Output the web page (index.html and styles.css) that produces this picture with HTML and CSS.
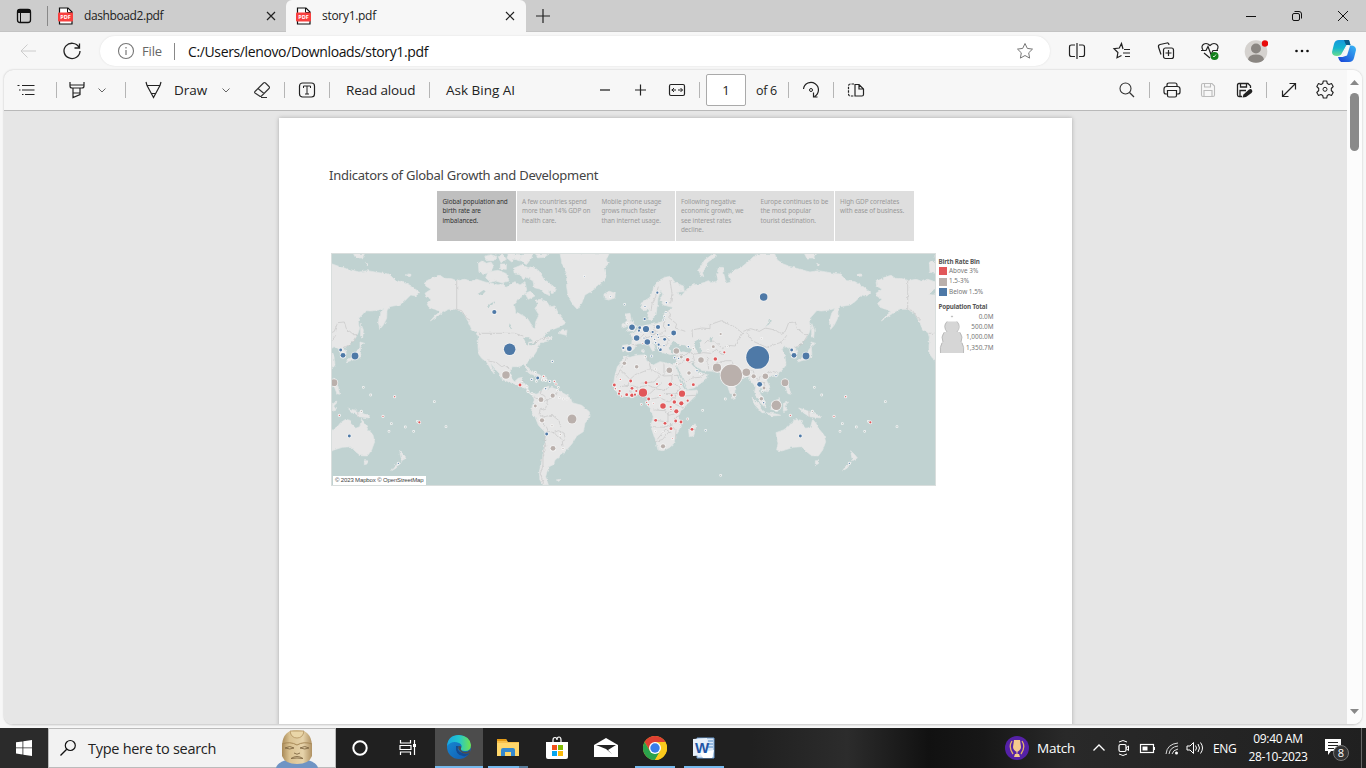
FILE: index.html
```html
<!DOCTYPE html>
<html lang="en">
<head>
<meta charset="utf-8">
<title>story1.pdf</title>
<link rel="stylesheet" href="styles.css">
</head>
<body>
<svg class="defs" width="0" height="0">
  <defs>
    <symbol id="pdf" viewBox="0 0 16 18"><path d="M1.500 1h8.500l4 4v12h-12.500z" fill="#fff" stroke="#111" stroke-width="1.200"/><path d="M9.500 1v4.500h4.500" fill="none" stroke="#111"/><rect x="0" y="5.500" width="15" height="9" rx="1" fill="#f8403f"/><text x="7.500" y="12.300" text-anchor="middle" class="pdf-label">PDF</text></symbol>
    <symbol id="close" viewBox="0 0 10 10"><path d="M1 1l8 8M9 1l-8 8" stroke="#222" stroke-width="1.200"/></symbol>
    <symbol id="chev" viewBox="0 0 10 20"><path d="M1.500 8.500l3.500 3.500 3.500-3.500" fill="none" stroke="#666"/></symbol>
  </defs>
</svg>
<div class="tabs">
  <svg class="i" viewBox="0 0 20 20"><rect x="3.500" y="3.500" width="13" height="13" rx="2.500" fill="none" stroke="#111" stroke-width="1.300"/><path d="M3.500 7V5q0-2 2-2h9q2 0 2 2v2z" fill="#111"/><path d="M6.500 7v9" stroke="#111"/></svg>
  <span class="tsep"></span>
  <div class="tab idle"><svg class="pdf"><use href="#pdf"/></svg><span class="t1">dashboad2.pdf</span><svg class="x"><use href="#close"/></svg></div>
  <div class="tab active"><svg class="pdf"><use href="#pdf"/></svg><span class="t2">story1.pdf</span><svg class="x"><use href="#close"/></svg></div>
  <svg class="newtab" viewBox="0 0 14 14"><path d="M7 0v14M0 7h14" stroke="#222" stroke-width="1.200"/></svg>
  <div class="win">
    <svg viewBox="0 0 12 12"><path d="M1 6.500h10" stroke="#111"/></svg>
    <svg viewBox="0 0 12 12"><rect x="1.500" y="3.500" width="7" height="7" rx="1.500" fill="none" stroke="#111"/><path d="M3.500 1.500h4.500q2.500 0 2.500 2.500v4.500" fill="none" stroke="#111"/></svg>
    <svg viewBox="0 0 12 12"><path d="M1 1l10 10M11 1L1 11" stroke="#111"/></svg>
  </div>
</div>
<div class="nav">
  <svg class="i" viewBox="0 0 20 20"><path d="M18 10H3M9.500 3.500L3 10l6.500 6.500" fill="none" stroke="#ccc"/></svg>
  <svg class="i" viewBox="0 0 20 20"><path d="M17 6.200A8 7.600 0 1 0 18 10M17.500 2.500v4.500h-5" fill="none" stroke="#222" stroke-width="1.300"/></svg>
  <div class="address">
    <svg class="info" viewBox="0 0 18 18"><circle cx="9" cy="9" r="7.500" fill="none" stroke="#777" stroke-width="1.100"/><path d="M9 8v5M9 5v1.500" stroke="#777" stroke-width="1.200"/></svg>
    <span class="file">File</span><span class="asep"></span><span class="url">C:/Users/lenovo/Downloads/story1.pdf</span>
    <svg class="star" viewBox="0 0 18 18"><path d="M9 1.500l2.300 4.900 5.200.7-3.800 3.700.9 5.300L9 13.500l-4.600 2.600.9-5.300L1.500 7.100l5.200-.7z" fill="none" stroke="#777"/></svg>
  </div>
  <svg class="i" viewBox="0 0 20 20"><path d="M8 4H4.500Q2.500 4 2.500 6v7.500q0 2 2 2H8M12 4h3.500q2 0 2 2v7.500q0 2-2 2H12M10 2v16" fill="none" stroke="#222" stroke-width="1.200"/></svg>
  <svg class="i" viewBox="0 0 20 20"><path d="M11 8L9.500 2.500 7.300 7 2 7.700l3.900 3.800-.9 5.200 4.500-2.200M12 8.500h6M11 12h7M13 15.500h5" fill="none" stroke="#222" stroke-width="1.200"/></svg>
  <svg class="i" viewBox="0 0 20 20"><rect x="7.500" y="7" width="10" height="10.500" rx="2" fill="none" stroke="#222" stroke-width="1.200"/><path d="M12.500 9v6M9.500 12h6M5 13.500L2.500 6q-.4-2 1.500-2.500L11 2q1.800-.3 2 2" fill="none" stroke="#222" stroke-width="1.200"/></svg>
  <svg class="i" viewBox="0 0 20 20"><path d="M3 9Q.5 5 4 3q3-1.500 6 1.500Q13 1.500 16 3q3.500 2 1 6M4 12l6 5M1 9.500h5l2-4 3 8 2-4h5" fill="none" stroke="#222" stroke-width="1.200"/><circle cx="14.500" cy="15" r="4" fill="#13801b"/><path d="M13 15l1 1 2-2.500" fill="none" stroke="#fff" stroke-width=".8"/></svg>
  <svg class="avatar" viewBox="0 0 24 24"><circle cx="12" cy="12.500" r="11.300" fill="#d5d2cf"/><circle cx="12" cy="9.500" r="5" fill="#8a8682"/><path d="M4 20.500q1-5 8-5t8 5q-3 3.200-8 3.200t-8-3.200" fill="#8a8682"/><circle cx="21" cy="4.500" r="3.200" fill="#e80b0b"/></svg>
  <svg class="i" viewBox="0 0 20 20"><g fill="#111"><circle cx="4.500" cy="10" r="1.300"/><circle cx="10" cy="10" r="1.300"/><circle cx="15.500" cy="10" r="1.300"/></g></svg>
  <svg class="avatar" viewBox="0 0 24 24"><defs><linearGradient id="cg" x1="0" y1="0" x2="0" y2="1"><stop stop-color="#1597dc"/><stop offset=".5" stop-color="#12b4cf"/><stop offset="1" stop-color="#6bdc8e"/></linearGradient><linearGradient id="cb" x1="1" y1="0" x2="0" y2="1"><stop stop-color="#38b9f5"/><stop offset="1" stop-color="#183fd6"/></linearGradient></defs><path d="M7 1h10l1.500 5h-4l-4.500 8q-1 3-5 3-5 0-5-4l2-8q1-4 5-4" fill="url(#cg)"/><path d="M12 1h5l1.500 5H14z" fill="#075a89"/><path d="M17 23H9q-2-1-3-5h4l4-9q1-2.500 5-2.500 5 0 5 4.500l-2 8q-1 4-5 4" fill="url(#cb)"/><path d="M14.500 7l-5 11h1l4.500-1.500L18 7z" fill="#f7f7f7"/></svg>
</div>
<div class="panel">
  <div class="left">
    <div class="pdfbar">
      <svg class="i" viewBox="0 0 20 20"><path d="M6 5.500h12.500M6 10h12.500M9 14.500h9.500M1.500 5.500h2M3 10h1.500M6 14.500h1.500" stroke="#222" stroke-width="1.200"/></svg>
      <span class="sep"></span>
      <svg class="i" viewBox="0 0 20 20"><path d="M3 2v4q0 2 2 2h10q2 0 2-2V2M3 5h14M6 8v9.500l7-3V8M6 13h7" fill="none" stroke="#222" stroke-width="1.200"/></svg>
      <svg class="c"><use href="#chev"/></svg>
      <span class="sep"></span>
      <svg class="i" viewBox="0 0 20 20"><path d="M3 2l1 3.500h13L18 2M4 5.500l6.500 12 6.500-12M8.500 13.500h4" fill="none" stroke="#222" stroke-width="1.200"/></svg>
      <span class="b draw">Draw</span>
      <svg class="c"><use href="#chev"/></svg>
      <svg class="i" viewBox="0 0 20 20"><path d="M3 11.500L11.500 3q1-1 2 0L17 6.500q1 1 0 2L9.500 16q-1 1-2 0L3 13q-1-1 0-1.500M6 8.500l6 5M9 17.500h6" fill="none" stroke="#333" stroke-width="1.100"/></svg>
      <span class="sep"></span>
      <svg class="i" viewBox="0 0 20 20"><rect x="2.500" y="3" width="15" height="14" rx="3" fill="none" stroke="#222" stroke-width="1.200"/><path d="M6.500 8V6h7v2M10 6v8M8 14h4" fill="none" stroke="#222"/></svg>
      <span class="sep"></span>
      <span class="b read">Read aloud</span>
      <span class="sep"></span>
      <span class="b bing">Ask Bing AI</span>
      <svg class="i" viewBox="0 0 20 20"><path d="M5 10h10" stroke="#444" stroke-width="1.300"/></svg>
      <svg class="i" viewBox="0 0 20 20"><path d="M5 10h11M10.500 4.500v11" stroke="#222" stroke-width="1.200"/></svg>
      <svg class="i" viewBox="0 0 20 20"><rect x="2.500" y="4.500" width="15" height="11" rx="1.500" fill="none" stroke="#222" stroke-width="1.200"/><path d="M4.500 10H9M11 10h4.500M7 8l-2 2 2 2M13.500 8l2 2-2 2" fill="none" stroke="#222"/></svg>
      <span class="sep"></span>
      <span class="pagebox">1</span>
      <span class="b of">of 6</span>
      <span class="sep"></span>
      <svg class="i" viewBox="0 0 20 20"><path d="M2.500 9a7.500 7.500 0 1 1 11 7.500M16.500 17H12.500v-4.500" fill="none" stroke="#222" stroke-width="1.200"/><circle cx="10" cy="10" r="1.500" fill="none" stroke="#222"/></svg>
      <span class="sep"></span>
      <svg class="i" viewBox="0 0 20 20"><path d="M8 4H4.500Q2.500 4 2.500 6v8q0 2 2 2H8" fill="none" stroke="#222" stroke-width="1.200" stroke-dasharray="2.500 1"/><path d="M9 4.500h4l4.500 4.500v5.500q0 1.500-1.500 1.500H9zM13 4.500V9h4.500" fill="none" stroke="#222" stroke-width="1.200"/></svg>
      <svg class="i" viewBox="0 0 20 20"><circle cx="8.500" cy="8.500" r="5.500" fill="none" stroke="#333" stroke-width="1.100"/><path d="M12.500 12.500l4.500 4.500" stroke="#333" stroke-width="1.200"/></svg>
      <span class="sep"></span>
      <svg class="i" viewBox="0 0 20 20"><path d="M5 14H4q-2 0-2-2V9q0-2.500 2.500-2.500h11Q18 6.500 18 9v3q0 2-2 2h-1M5 6V5q0-2 2-2h6q2 0 2 2v1M5.500 10.500h9v5q0 1.500-1.500 1.500H7q-1.500 0-1.500-1.500z" fill="none" stroke="#222" stroke-width="1.200"/></svg>
      <svg class="i" viewBox="0 0 20 20"><path d="M3.500 5q0-1.500 1.500-1.500h9L16.500 6v9q0 1.500-1.500 1.500H5q-1.500 0-1.500-1.500zM6.500 3.500V7h6V3.500M6 16.500v-6h8v6" fill="none" stroke="#bbb" stroke-width="1.100"/></svg>
      <svg class="i" viewBox="0 0 20 20"><path d="M16.500 8V6L14 3.500H5Q3.500 3.500 3.500 5v10q0 1.500 1.500 1.500h3M6.500 3.500V7h6V3.500M6 16.500v-6h6" fill="none" stroke="#222" stroke-width="1.300"/><path d="M8.500 17.500l1-3 5.500-5q2-1 3 .5t-.5 3l-5.500 4z" fill="#222"/></svg>
      <span class="sep"></span>
      <svg class="i" viewBox="0 0 20 20"><path d="M3.500 16.500l13-13M10.500 3.500h6v6M3.500 10.500v6h6" fill="none" stroke="#222" stroke-width="1.200"/></svg>
      <svg class="i" viewBox="0 0 20 20"><path d="M8.300 1.500h3.400l.6 2.500 1.700.9 2.500-.9 1.700 3-1.900 2v2l1.900 2-1.700 3-2.500-.9-1.700.9-.6 2.500H8.300L7.700 16 6 15.100l-2.500.9-1.700-3 1.900-2V9l-1.900-2 1.700-3 2.500.9L7.700 4z" transform="translate(0 -.5)" fill="none" stroke="#222" stroke-width="1.100" stroke-linejoin="round"/><circle cx="10" cy="9.300" r="2" fill="none" stroke="#222"/></svg>
    </div>
    <div class="viewer">
      <div class="page">
        <h1>Indicators of Global Growth and Development</h1>
        <div class="story">
          <div class="on">Global population and<br>birth rate are<br>imbalanced.</div>
          <div class="cut">A few countries spend<br>more than 14% GDP on<br>health care.</div>
          <div>Mobile phone usage<br>grows much faster<br>than internet usage.</div>
          <div class="cut">Following negative<br>economic growth, we<br>see interest rates<br>decline.</div>
          <div>Europe continues to be<br>the most popular<br>tourist destination.</div>
          <div class="cut">High GDP correlates<br>with ease of business.</div>
        </div>
        <div class="viz">
          <div class="map">
            <svg viewBox="331 253 605 233" width="605" height="233">
              <defs>
                <filter id="coast" x="0" y="0" width="100%" height="100%"><feTurbulence type="fractalNoise" baseFrequency=".28" numOctaves="2" seed="4"/><feDisplacementMap in="SourceGraphic" scale="3" xChannelSelector="R" yChannelSelector="G"/></filter>
                <g id="americas" transform="translate(325 250) scale(.33333)">
                  <path class="land" d="M300 95L325 82 345 76 358 85 380 86 395 92 420 88 440 94 455 88 480 96 500 100 520 104 535 102 545 112 560 100 570 95 585 105 600 95 605 120 595 138 577 148 568 165 572 185 590 195 606 203 618 222 630 238 632 215 642 195 630 175 638 165 632 150 648 148 665 155 675 170 690 168 700 190 712 205 722 220 705 230 685 238 660 250 655 262 682 262 672 272 650 278 640 285 634 305 625 318 608 335 604 345 615 360 621 372 612 370 606 355 598 345 580 350 562 350 556 362 560 385 568 395 580 385 592 382 588 398 598 405 608 408 610 425 620 432 632 430 640 438 625 438 612 430 600 415 585 408 570 402 550 395 530 388 522 370 505 350 496 338 504 360 508 372 500 362 485 336 470 325 461 312 459 290 460 262 456 248 440 238 430 215 415 190 395 178 370 178 350 190 335 200 316 213 330 197 345 185 330 178 312 172 305 160 318 148 305 140 300 130 318 118 302 108Z"/>
                  <path class="land" d="M625 440L640 430 655 415 672 408 668 418 680 412 700 420 715 430 735 440 742 458 770 466 793 485 795 500 780 520 775 545 755 558 742 580 725 600 712 612 700 622 690 630 687 643 672 650 666 665 662 680 670 704 655 705 645 690 643 665 650 635 655 610 660 575 662 550 640 525 630 500 620 483 622 465 628 450Z"/>
                  <path class="land" d="M460 40l12-8 12 8 14-4 8 12-8 15-16 8-20-4zM490 65l30-4 24 10 8 22-20 6-20-6-16 4-14-14zM476 20l22-6 18 6-10 12-22 0zM520 20l14-6 10 14-16 10zM526 42l18 0 0 16-18-2zM550 10l40 4-6 18-18-4-6 8-14-12zM590 12l34 0-6 14-14 18-18-12zM565 55l25-10 20 8 14-4 18 14 14 24 20 14 16 14-8 16-14-10 6 16-14-4-18-16-16-4-4-20-20-12-10 8-6-14-20-4zM600 130l16-6 14 14-20 10zM712 238l14 4-2 14-22-6zM605 364l20 2 22 10-2 6-22-8zM648 380l16 2 6 8-22-2zM632 12l40 0-14 10-20 2zM694 690l12-2-4 6zM244 74l12-2 2 6-10 2z"/>
                  <path class="water" d="M594 262l18 0 12 12-14 2 2 12-8-4-6-12zM614 280l22-4-6 8-14 2zM554 220l8 14-4 4-6-10zM486 170l12-10 12-6-8 10-12 8zM458 132l18-12 6 4-10 10z"/>
                  <path class="border" d="M395 92V178M395 178L410 182 425 205 435 210M458 250H568L595 258M620 285L640 272 660 262 672 268M490 333L515 338 530 350 540 346 556 360M586 398l8-8 4 6M652 415l-6 16 12 6 10 16-6 22M698 420l-4 14-20 12-16 8-16-4-16-10M662 475l-16 4-4 14 12 8 2 28M656 500l26-4 20 16 6 20M664 530l6 14 16 4 14-6 16 6 6 20-10 6 2 16M664 545l-6 28 4 16-8 34 0 24-8 24 10 30M686 546l12 14 14 8"/>
                </g>
                <g id="eurasia" transform="translate(570 250) scale(.33333)">
                  <path class="land" d="M212 175L213 160 240 142 252 110 266 92 285 82 302 79 316 98 340 108 344 124 320 128 334 138 350 118 368 105 385 103 400 98 415 92 425 98 444 92 440 72 446 52 460 52 462 75 470 100 482 96 475 75 490 62 510 55 535 35 550 20 580 12 614 12 622 30 640 42 662 50 690 58 720 66 745 62 780 68 810 72 830 92 855 95 880 110 902 128 890 138 875 135 860 150 855 155 840 165 810 170 804 185 803 205 793 225 782 238 778 215 785 190 795 175 780 180 755 183 740 182 720 205 718 215 722 235 714 258 700 275 687 288 676 294 682 310 674 325 665 315 660 296 645 290 635 298 645 320 648 345 635 362 615 374 596 380 590 392 600 410 594 426 580 422 570 412 570 430 580 445 588 474 574 462 558 440 554 425 557 410 542 392 535 378 522 384 500 402 497 420 490 434 480 430 470 400 456 374 430 364 400 362 382 352 368 335 364 342 384 366 412 374 408 388 395 398 372 414 354 418 342 392 328 360 320 345 320 326 318 312 300 314 278 308 268 302 260 286 248 276 256 296 248 304 240 290 228 272 215 280 200 282 192 298 178 306 160 304 158 286 185 282 187 262 178 252 200 244 210 230 235 224 265 220 285 210 282 190 300 180 308 172 280 165 270 152 278 132 272 122 264 145 262 168 258 195 245 210 232 208 238 178 225 182Z"/>
                  <path class="land" d="M160 318L180 322 200 316 224 314 230 332 250 345 270 335 305 342 316 340 322 362 340 396 350 422 382 420 376 438 352 462 334 480 326 498 334 530 318 556 316 576 300 592 280 602 264 600 256 570 242 528 250 500 240 475 230 462 234 446 225 438 205 434 185 440 160 440 142 428 130 408 134 380 142 350 156 334Z"/>
                  <path class="land" d="M-30 10L-24 40-10 70-10 110-5 140 10 165 22 178 35 160 45 135 70 120 95 98 108 78 102 55 118 38 108 30 118 10ZM102 132l16-8 18 6-2 14-18 6-14-4zM168 192l12-2 4 22 14 18-4 12-26 2 8-10-8-18zM156 222l10-4 4 12-14 4zM214 300l10-2-4 12zM390 74l-4-14 18-30 28-20 8 8-26 18-16 34 4 10zM375 518l3 12-8 28-12 2-2-18zM486 436l6-2 4 12-7 2zM704 12l32 0-6 12-20 0zM740 40l8 2-2 6zM866 72l10 2-8 4z"/>
                  <path class="land" d="M725 220l8 20-2 24-6-6zM723 276l14 4-14 12zM724 290l2 30-16 8-28 8 4-8 22-10 8-18zM620 370l4-6 2 12zM646 385l8 14 8 34-8-2-10-26zM546 442l14 12 24 34-8 0-22-24zM606 458l22-12 4 18-10 18-20-4zM588 488l32 4 12 4-28 2zM640 460l16-4-12 12 8 12-12 4zM686 474l30 10 34 14 2 6-34-4-18-12zM618 548L640 540 655 530 665 518 680 508 698 512 695 520 710 535 722 530 728 508 738 520 745 535 762 555 767 575 758 600 745 618 725 617 710 605 695 590 670 592 635 603 620 600 624 580ZM736 632l10 0-2 10-8 2zM842 602l14 14 6 8-14 8zM844 636l-12 18-14 8 8-12z"/>
                  <path class="water" d="M296 294l14-22 16 12 18 2 22 12-6 10-28-4-28 4zM372 276l16-10 8 6-8 6 8 30-10 4-12-22zM420 262l8 0-4 16-6-6zM585 232l18-14 2-8-8 0-4 12zM318 368l16 24 14 24-4 2-14-22zM312 484l10-4-4 12z"/>
                  <path class="border" d="M265 110l-8 30-10 20-4 20M300 90l6 40-4 30M288 180l14 12-6 10 24 20-4 12 30 10M250 226l8 18-10 12M286 208l-6 20 8 12-14 12-26 2M185 282l22 6M222 252l-12 14M237 242l12 16-26 6 18 8M260 262l24-4 14 12-10 18-24-2-10-14M368 262l-2-22 30-6 24 2 0-12 34-12 24 12 16 6 24 20-16 22-6 16-24-2-14 10-24-22-22-2-8 8M520 244l22-8 26 8 18-10 20 4 28 12 12-6 10-26 20-2 6 20 22 18 10 0-12 20-12 14M530 248l20 26 40 18 46-16 14-20M320 318l26-2 10-8 20 4 24-4 22 2 18-12 10 12 12 4M370 314l4 24M412 316l4 42M324 344l26-14 22 12M348 394l18-10 24-2 18-14M430 362l10-24 28-6 16 0 12 24 34 12 18-8M468 372l16-28M500 362l22 10-2 12M550 362l4 18 10 12 8-16M566 394l16 4 6 20M620 368l-12-4-18 6M695 282l-22 12M716 484l2 18M170 322l-18 38 28 28 18-16M150 360l-10 22M198 374l44-18-10-38M242 358l40 20 44-2M282 340v38M212 400l40-4 18-20M180 388l-6 18-24 4M174 406l26 4 6 26M184 412l-2 26M200 412l34-6 24 8 18-16M236 434l20-18 30 6 20-26 0-16M306 396l26 18-16 18-34-2M232 450l34-8 32 14 20-20M318 430l22 8 36-2M316 434l-2 28 32 14M250 480l36 2 10 14 24-6M248 510l46 6 0-26 18-12M246 530l38 2 28-12M262 568l24-30 18 10M300 522l18 20-2 24M330 496l-16 8 0 16M254 576l24-8 20-24"/>
                </g>
              </defs>
              <rect x="331" y="253" width="605" height="233" fill="#c0d2d1"/>
              <g filter="url(#coast)">
                <use href="#americas"/><use href="#eurasia"/><use href="#eurasia" x="-451"/><use href="#americas" x="451"/>
              </g>
              <g id="bubbles"></g>
              <rect x="331.500" y="253.500" width="604" height="232" fill="none" stroke="#d9dedd"/>
            </svg>
            <span class="credit">© 2023 Mapbox © OpenStreetMap</span>
          </div>
          <div class="legend">
            <b>Birth Rate Bin</b>
            <div class="key"><i class="red"></i>Above 3%</div>
            <div class="key"><i class="tan"></i>1.5-3%</div>
            <div class="key"><i class="blue"></i>Below 1.5%</div>
            <b class="pop">Population Total</b>
            <div class="sizes">
              <svg width="26" height="42" viewBox="0 0 26 42"><g fill="#d6d6d6" stroke="#aaa" stroke-width=".7"><circle cx="13" cy="4.500" r=".6"/><path d="M8 9.500Q3 14 8 20H18Q22 14 18 9.500z" stroke="none"/><path d="M5 20H21Q24.500 25 22 30.500H4Q1.500 25 5 20M3 30H23Q25.500 35 24.500 41H1.500Q.5 35 3 30" stroke="none"/><path d="M8 9.500Q3.500 14.500 8 20M18 9.500Q22.500 14.500 18 20M5 20.500Q1.500 25 4 30M21 20.500Q24.500 25 22 30M3 31Q.5 35 1.500 41M23 31Q25.500 35 24.500 41" fill="none"/></g></svg>
              <div class="nums"><span>0.0M</span><span>500.0M</span><span>1,000.0M</span><span>1,350.7M</span></div>
            </div>
          </div>
        </div>
      </div>
    </div>
  </div>
  <div class="scroll"><svg width="9" height="5"><path d="M0 5L4.500 0 9 5z" fill="#888"/></svg><span class="thumb"></span><svg width="9" height="5"><path d="M0 0L4.500 5 9 0z" fill="#888"/></svg></div>
</div>
<div class="taskbar">
  <div class="start"><svg width="16" height="16" viewBox="0 0 16 16"><path d="M0 2.300l6.500-.9v6.100H0zM7.300 1.300L16 0v7.500H7.300zM0 8.300h6.500v6.200L0 13.600zM7.300 8.300H16V16l-8.700-1.300z" fill="#fff"/></svg></div>
  <div class="search">
    <svg width="18" height="18" viewBox="0 0 18 18"><circle cx="11.300" cy="6.500" r="5" fill="none" stroke="#111" stroke-width="1.200"/><path d="M7.700 10.200L1.500 16.500" stroke="#111" stroke-width="1.300"/></svg>
    <span>Type here to search</span>
    <svg class="head" width="42" height="39" viewBox="0 0 42 39"><defs><linearGradient id="hg"><stop stop-color="#a98a58"/><stop offset=".25" stop-color="#dac291"/><stop offset=".7" stop-color="#e6d3aa"/><stop offset="1" stop-color="#b09263"/></linearGradient></defs><path d="M0 39q1-5 10-8h22q9 3 10 8z" fill="#6f94c4"/><path d="M6 16Q7 1 21 1t15 15v11q-3 8-15 8T6 27z" fill="url(#hg)"/><path d="M14 2h14q-1 7-7 7t-7-7" fill="#ead6a8" stroke="#b1925f" stroke-width=".8"/><path d="M6 15q8-3 15 1 7-4 15-1" fill="none" stroke="#a88a58"/><path d="M9 19q5-3 9 0-4 2-9 0M24 19q5-3 9 0-4 2-9 0M18 24q3 2.500 6 0M15 29.500q6-4 12 0-6-1-12 0" fill="none" stroke="#816944" stroke-width=".9"/></svg>
  </div>
  <div class="task"><svg width="18" height="18"><circle cx="9" cy="9" r="6.700" fill="none" stroke="#fff" stroke-width="2"/></svg></div>
  <div class="task"><svg width="18" height="18" viewBox="0 0 18 18"><path d="M1.500 1v3h10V1M1.500 16v-3h10v3M1 6.500h11v4H1zM15.500 1v15" fill="none" stroke="#fff" stroke-width="1.200"/><rect x="14" y="5" width="3" height="3" fill="#fff"/></svg></div>
  <div class="task edge"><svg width="24" height="24" viewBox="0 0 24 24"><defs><linearGradient id="e1"><stop stop-color="#18a7e4"/><stop offset=".5" stop-color="#23c7cc"/><stop offset="1" stop-color="#72e34c"/></linearGradient><linearGradient id="e2" x1="0" y1="0" x2="1" y2="1"><stop stop-color="#168dd5"/><stop offset="1" stop-color="#1259b0"/></linearGradient></defs><circle cx="12" cy="12" r="12" fill="url(#e2)"/><path d="M0 11Q1 0 12 0q11 1 12 10 0 6-6 6-5 0-4-3 2-3-2-5Q5 5 0 11" fill="url(#e1)"/><path d="M9 11q-1 9 7 10 4 1 7-3-5 2-10-1-4-3-1-6z" fill="#134b92"/><path d="M12 11q3 0 2 2-1 4 5 4 2 0 4-2v3q-7 2-10-2-3-3-1-5" fill="#4c4c4c"/></svg></div>
  <div class="task run folder"><svg width="22" height="20" viewBox="0 0 22 20"><path d="M0 1h9l2 3h11v14H0z" fill="#f6c04c"/><path d="M0 5h22v13H0z" fill="#ffd76b"/><path d="M0 1h9l1 2H0z" fill="#e49b16"/><path d="M4 18v-6q0-2 2-2h10q2 0 2 2v6h-4v-4H8v4z" fill="#3589cf"/></svg></div>
  <div class="task"><svg width="24" height="24" viewBox="0 0 24 24"><path d="M8 8V4q0-2.500 2-2.500T12 4q0-3 2-3t2 3v4" fill="none" stroke="#fff" stroke-width="1.200"/><path d="M1 6h22v15q0 2-2 2H3q-2 0-2-2z" fill="#fff"/><path d="M7 9h5v5H7z" fill="#f1511b"/><path d="M13 9h5v5h-5z" fill="#80bb03"/><path d="M7 15h5v5H7z" fill="#05a6f0"/><path d="M13 15h5v5h-5z" fill="#fbba0a"/></svg></div>
  <div class="task"><svg width="24" height="20" viewBox="0 0 24 20"><path d="M0 7L12 0l12 7v12H0z" fill="#fff"/><path d="M2 7h20l-8 5 4 4-6-5z" fill="#222"/></svg></div>
  <div class="task run"><svg width="24" height="24" viewBox="0 0 24 24"><circle cx="12" cy="12" r="12" fill="#f4c51d"/><path d="M1.600 6A12 12 0 0 1 22.400 6H12L7 15z" fill="#df4032"/><path d="M1.600 6A12 12 0 0 0 12 24l5.200-9H7z" fill="#2ba24c"/><path d="M12 24l5.200-9V6h5.200A12 12 0 0 1 12 24" fill="#fbc91c"/><circle cx="12" cy="12" r="6" fill="#fff"/><circle cx="12" cy="12" r="4.700" fill="#397de8"/></svg></div>
  <div class="task run"><svg width="22" height="22" viewBox="0 0 22 22"><path d="M4 1h17v20H4z" fill="#dce9f7" stroke="#6d9cd0"/><path d="M0 2l14-1v17L0 19z" fill="#e7f0fa"/><path d="M15 4h5M15 7h5M15 10h5" stroke="#4f8acb"/><path d="M7 16l14-3-2 8H10z" fill="#fff"/><text x="9" y="15.500" text-anchor="middle" class="word">W</text></svg></div>
  <div class="tray">
    <svg viewBox="0 0 24 24"><circle cx="12" cy="12" r="12" fill="#5521a7"/><path d="M9 4h6l1 7q0 3-4 5-4-2-4-5zM10 18h4l1 3H9zM11.500 15h1v4h-1z" fill="#f4c98d"/><path d="M7 5q-4 6 1 13M17 5q4 6-1 13" fill="none" stroke="#e2b36b" stroke-width="1.300"/></svg>
    <span class="match">Match</span>
    <svg viewBox="0 0 24 24"><path d="M6.500 14.500L12 9l5.500 5.500" fill="none" stroke="#fff" stroke-width="1.300"/></svg>
    <svg viewBox="0 0 24 24"><rect x="7" y="8.500" width="7" height="7" rx="1.500" fill="none" stroke="#fff" stroke-width="1.200"/><path d="M14 12l2.500-2v4.500l-2.500-2M7 6q4-3 8 0M7 18q4 3 8 0" fill="none" stroke="#fff"/></svg>
    <svg viewBox="0 0 24 24"><rect x="4.500" y="8.500" width="13" height="8" fill="none" stroke="#fff" stroke-width="1.200"/><path d="M6.500 10.500h5v4h-5zM18 11h1v3h-1z" fill="#fff"/></svg>
    <svg viewBox="0 0 24 24"><path d="M5 18Q6 8 17 7M8 18q1-7 9-8M11 18q1-4 6-5" fill="none" stroke="#ddd"/><circle cx="15.500" cy="17" r="1.500" fill="#fff"/></svg>
    <svg viewBox="0 0 24 24"><path d="M4 10h3l3.500-3.500v11L7 14H4zM12.500 9.500q2 2.500 0 5M15 8q3 4 0 8M17.500 6.500q4 5.500 0 11" fill="none" stroke="#fff"/></svg>
    <span class="eng">ENG</span>
    <span class="clock">09:40 AM<br>28-10-2023</span>
    <svg class="note" viewBox="0 0 26 26"><path d="M1 4h16v12H7l-3 4v-4H1z" fill="#fff"/><path d="M4 7.500h10M4 10.500h10M4 13.500h6" stroke="#222"/><circle cx="17" cy="18" r="7.500" fill="#333" stroke="#777"/><text x="17" y="22" text-anchor="middle" class="badge">8</text></svg>
    <span class="peek"></span>
  </div>
</div>
<script src="map.js"></script>
</body>
</html>
```

FILE: styles.css
```css
* { box-sizing: border-box; }
body { margin: 0; width: 1366px; height: 768px; overflow: hidden; background: #f7f7f7; font-family: "Open Sans", sans-serif; color: #222; }
svg { display: block; flex: none; }
.defs { position: absolute; }
span { white-space: nowrap; }
.i { width: 20px; height: 20px; }
.pdf-label { font: bold 5.500px "Open Sans", sans-serif; fill: #fff; }

.tabs { height: 32px; background: #cdcdcd; display: flex; align-items: center; padding-left: 14px; font-size: 12px; border-bottom: 1px solid #c3c3c3; }
.tsep { width: 1px; height: 20px; background: #888; margin-left: 13px; }
.tab { height: 32px; display: flex; align-items: center; padding-left: 10px; }
.idle { width: 238px; }
.active { width: 240px; background: #f7f7f7; border-radius: 6px 6px 0 0; }
.pdf { width: 16px; height: 18px; margin-right: 10px; }
.x { width: 10px; height: 10px; margin-left: auto; margin-right: 10px; }
.active .x { margin-right: 11px; }
.t1 { letter-spacing: -.4px; }
.t2 { letter-spacing: -.3px; }
.newtab { width: 14px; height: 14px; margin-left: 10px; }
.win { margin-left: auto; padding-right: 17px; display: flex; gap: 34px; }
.win svg { width: 12px; height: 12px; }

.nav { height: 38px; display: grid; align-items: center; grid-template-columns: 44px 38px 967px 45px 44px 44px 44px 48px 40px 24px; padding-left: 18px; }
.address { width: 950px; height: 30px; background: #fff; border-radius: 15px; display: flex; align-items: center; padding: 0 16px 0 17px; font-size: 14px; box-shadow: 0 0 2px #ddd; }
.info { width: 18px; margin-right: 7px; }
.file { font-size: 13px; color: #666; width: 32px; letter-spacing: -.15px; }
.asep { width: 1px; height: 17px; background: #888; margin-right: 13px; }
.url { letter-spacing: -.37px; color: #111; }
.star { width: 18px; height: 18px; margin-left: auto; }
.avatar { width: 24px; height: 24px; }

.panel { margin: 0 4px; height: 655px; display: flex; border-radius: 9px; overflow: hidden; border-bottom: 1px solid #d4d4d4; box-shadow: 0 0 2px #bbb; }
.left { width: 1343px; }
.pdfbar { height: 41px; border-bottom: 1px solid #b9b9b9; padding-left: 12px; display: grid; align-items: center; font-size: 13.500px; grid-template-columns: 40px 11px 30px 28px 18px 31px 47px 31px 32px 13px 32px 17px 83px 17px 149px 35px 37px 32px 7px 50px 32px 13px 32px 13px 271px 32px 13px 36px 36px 32px 13px 36px 20px; }
.sep { width: 1px; height: 16px; background: #b5b5b5; }
.c { width: 10px; height: 20px; }
.read { letter-spacing: -.15px; }
.pagebox { width: 40px; height: 32px; border: 1px solid #aaa; border-radius: 2px; background: #fff; display: flex; align-items: center; justify-content: center; font-size: 13px; }
.of { font-size: 12.500px; letter-spacing: -.3px; }
.viewer { height: 614px; background: #e6e6e6; padding: 7px 0 0 275px; }
.page { width: 793px; height: 610px; background: #fff; box-shadow: 0 0 4px #aaa; padding: 48px 0 0 50px; }
.scroll { width: 15px; background: #fcfcfc; display: flex; flex-direction: column; align-items: center; padding: 10px 0; }
.thumb { width: 9px; height: 58px; border-radius: 5px; background: #8a8a8a; margin: 8px 0 auto; }

h1 { margin: 0; font: 13px/18px "Noto Sans", sans-serif; letter-spacing: -.26px; color: #444; height: 25px; white-space: nowrap; }
.story { margin-left: 108px; width: 477px; height: 50px; display: grid; grid-template-columns: 79px 80px 79px 80px 79px 80px; color: #999; font: 6.400px/9.400px "Noto Sans", sans-serif; letter-spacing: -.08px; white-space: nowrap; }
.story div { background: #dedede; padding: 6px 0 0 5.500px; }
.story .on { background: #bfbfbf; color: #333; }
.story .cut { border-left: 1px solid #fff; padding-left: 5px; }
.viz { display: flex; padding: 12px 0 0 2px; }
.map { width: 605px; height: 233px; position: relative; }
.land { fill: #e7e7e7; stroke: #e3e6e5; stroke-width: 2; }
.water { fill: #c0d2d1; }
.border { fill: none; stroke: #c6c6c6; stroke-width: 2; stroke-linejoin: round; }
.credit { position: absolute; left: 2px; bottom: 1px; width: 93px; height: 9px; background: #fff; font: 6px/9px "Liberation Sans", sans-serif; letter-spacing: -.14px; padding-left: 2px; color: #444; }
.legend { margin-left: 2.500px; padding-top: 4px; width: 60px; font: 6.400px/10.400px "Noto Sans", sans-serif; color: #777; white-space: nowrap; }
.legend b { display: block; height: 9px; line-height: 9px; color: #555; font-size: 6.300px; letter-spacing: -.17px; }
.key { display: flex; align-items: center; height: 10.400px; gap: 2.500px; }
.key i { width: 8px; height: 8px; }
.red { background: #e15759; }
.tan { background: #bab0ac; }
.blue { background: #4e79a7; }
.legend .pop { margin-top: 5px; }
.sizes { display: flex; height: 42px; padding-top: .5px; }
.nums { width: 29px; display: flex; flex-direction: column; align-items: flex-end; line-height: 10.400px; }

.taskbar { margin-top: 3px; height: 40px; background: linear-gradient(90deg, #202020 0 55%, #2c2c2c 62%, #111 68%, #171717 72%, #292929 78%, #202020); display: flex; color: #fff; }
.start { width: 48px; background: #2b2b2b; display: flex; align-items: center; justify-content: center; }
.search { width: 288px; background: #f2f2f2; border: 1px solid #bbb; display: flex; align-items: center; padding-left: 10px; color: #222; font-size: 14.500px; }
.search span { margin-left: 11px; letter-spacing: -.28px; }
.head { margin-left: auto; margin-right: 17px; }
.task { width: 49px; display: flex; align-items: center; justify-content: center; }
.search + .task { width: 48px; }
.search + .task + .task { width: 51px; padding-right: 4px; }
.task.edge { width: 48px; background: #4c4c4c; border-bottom: 2px solid #76b9ed; }
.run { background: linear-gradient(#76b9ed, #76b9ed) center bottom / 40px 2px no-repeat; }
.folder { background: linear-gradient(90deg, #76b9ed 31px, #587d9b 31px) center bottom / 40px 2px no-repeat; }
.word { font: bold 15px "Liberation Sans", sans-serif; fill: #1f56a5; }
.tray { margin-left: auto; display: grid; align-items: center; grid-template-columns: 32px 50px 25px 24px 25px 22px 30px 35px 76px 37px 5px; }
.tray svg { width: 24px; height: 24px; }
.match { font-size: 13.500px; letter-spacing: -.2px; }
.eng { font-size: 12px; letter-spacing: -.3px; }
.clock { font-size: 12px; line-height: 18px; text-align: center; letter-spacing: -.35px; width: 60px; }
.tray .note { width: 26px; height: 26px; }
.badge { font: 11px "Open Sans", sans-serif; fill: #fff; }
.peek { width: 1px; height: 40px; background: #666; }
```

FILE: map.js
```js
// Bubble positions in map tile units (a third of a pixel): x, y, radius.
const colors = { r: "#e15759", t: "#bab0ac", b: "#4e79a7" };
const west = {
  b: [[508,186,6],[554,298,17],[682,334,2],[638,384,4],[620,388,2],[662,416,2],[674,394,2],[665,552,4]],
  t: [[543,375,11],[648,449,7],[683,437,6],[631,468,4],[651,511,6],[741,507,13],[684,595,7],[681,527,2],[706,553,2],[714,595,2],[631,367,1],[634,394,1],[653,390,2],[662,391,2],[591,397,1],[597,405,1],[606,410,1],[609,424,2],[621,431,1],[700,412,1],[697,421,1],[703,443,1],[715,447,1],[726,447,1]],
  r: [[585,405,4],[656,379,2],[688,394,2],[693,402,2]]
};
const east = {
  b: [[43,79,1],[121,140,1],[164,163,1],[262,128,3],[225,169,2],[289,158,2],[581,141,11],[186,232,8],[228,237,9],[264,231,6],[311,249,7],[296,225,3],[200,264,8],[232,276,8],[178,296,7],[160,294,3],[209,233,4],[207,242,3],[248,246,3],[245,260,2],[254,268,2],[263,254,2],[265,262,2],[257,278,2],[266,284,3],[271,299,4],[266,294,2],[284,268,4],[224,207,3],[288,187,1],[283,199,1],[281,210,1],[245,318,2],[213,246,1],[222,264,2],[297,260,1],[282,287,2],[326,325,2],[314,323,2],[355,290,2],[381,362,2],[563,322,34],[665,300,4],[672,316,7],[708,318,10],[569,403,7],[618,377,2],[581,458,2],[691,558,4],[407,541,1],[838,640,2]],
  t: [[172,220,1],[163,340,5],[200,350,5],[256,357,2],[298,361,8],[319,303,8],[334,321,4],[370,296,2],[393,330,8],[357,369,5],[452,252,3],[430,290,4],[472,289,1],[414,301,1],[441,353,12],[484,376,32],[529,367,11],[551,379,6],[586,379,8],[582,414,4],[574,446,5],[619,466,14],[645,398,10],[493,435,4],[279,589,6],[226,320,2],[320,341,2],[391,371,1],[575,265,1],[466,447,1],[452,676,1],[398,481,1],[727,484,2],[733,412,1],[755,435,1],[946,455,1],[817,521,1],[810,544,1],[859,531,1],[884,544,1],[895,514,1],[981,530,1],[256,544,1],[279,547,1],[577,424,1]],
  r: [[353,329,5],[436,327,5],[463,307,3],[151,388,2],[182,393,4],[228,398,4],[261,402,3],[301,403,5],[333,403,2],[370,404,4],[133,405,4],[136,416,2],[149,423,3],[147,431,3],[155,438,2],[186,415,4],[199,423,3],[170,434,4],[186,436,5],[195,434,3],[219,428,12],[336,431,9],[236,447,4],[270,436,2],[305,436,3],[313,456,5],[334,460,6],[353,452,3],[230,457,2],[235,464,2],[214,463,1],[250,460,1],[279,468,8],[302,471,3],[303,478,2],[319,484,6],[257,511,4],[285,520,4],[317,513,4],[333,516,4],[353,507,1],[303,536,4],[366,538,4],[308,566,1],[218,280,1],[661,496,2],[792,499,2],[827,440,2],[901,517,3]]
};
const layer = document.getElementById("bubbles");
function plot(set, originX) {
  for (const key of Object.keys(set)) {
    for (const [x, y, r] of set[key]) {
      const c = document.createElementNS("http://www.w3.org/2000/svg", "circle");
      c.setAttribute("cx", originX + x / 3);
      c.setAttribute("cy", 250 + y / 3);
      c.setAttribute("r", r > 2 ? r / 3 + .1 : r * .2 + .2);
      c.setAttribute("fill", colors[key]);
      c.setAttribute("stroke", "#f4f4f4");
      c.setAttribute("stroke-width", r > 2 ? 1.5 : 2);
      c.setAttribute("paint-order", "stroke");
      layer.appendChild(c);
    }
  }
}
plot(west, 325);
plot(east, 119);
plot(east, 570);
```
